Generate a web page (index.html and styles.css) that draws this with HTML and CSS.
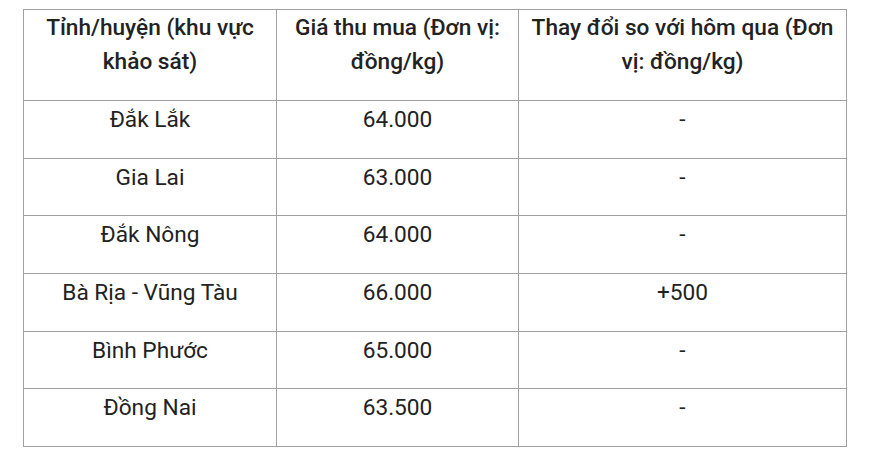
FILE: index.html
```html
<!DOCTYPE html>
<html lang="vi">
<head>
<meta charset="utf-8">
<link rel="stylesheet" href="styles.css">
</head>
<body>
<div class="wrap">
<table class="price-table">
  <colgroup>
    <col class="c1"><col class="c2"><col class="c3">
  </colgroup>
  <thead>
    <tr>
      <th>Tỉnh/huyện (khu vực khảo sát)</th>
      <th>Giá thu mua (Đơn vị: đồng/kg)</th>
      <th>Thay đổi so với hôm qua (Đơn vị: đồng/kg)</th>
    </tr>
  </thead>
  <tbody>
    <tr><td>Đắk Lắk</td><td>64.000</td><td>-</td></tr>
    <tr><td>Gia Lai</td><td>63.000</td><td>-</td></tr>
    <tr><td>Đắk Nông</td><td>64.000</td><td>-</td></tr>
    <tr><td>Bà Rịa - Vũng Tàu</td><td>66.000</td><td>+500</td></tr>
    <tr><td>Bình Phước</td><td>65.000</td><td>-</td></tr>
    <tr><td>Đồng Nai</td><td>63.500</td><td>-</td></tr>
  </tbody>
</table>
</div>
</body>
</html>
```

FILE: styles.css
```css
html, body {
  margin: 0;
  padding: 0;
  background: #ffffff;
}
.wrap {
  padding: 9px 0 0 23px;
}
.price-table {
  border-collapse: collapse;
  table-layout: fixed;
  width: 823px;
  font-family: Roboto, "Noto Sans", sans-serif;
  font-size: 22.67px;
  line-height: 34px;
  color: #222222;
}
.c1 { width: 253px; }
.c2 { width: 242px; }
.c3 { width: 328px; }
.price-table th,
.price-table td {
  border: 1px solid #a0a0a0;
  text-align: center;
  vertical-align: top;
  padding: 2px 8px 20.7px;
}
.price-table th {
  font-weight: 500;
  padding-top: 1px;
  padding-bottom: 21px;
}
```
